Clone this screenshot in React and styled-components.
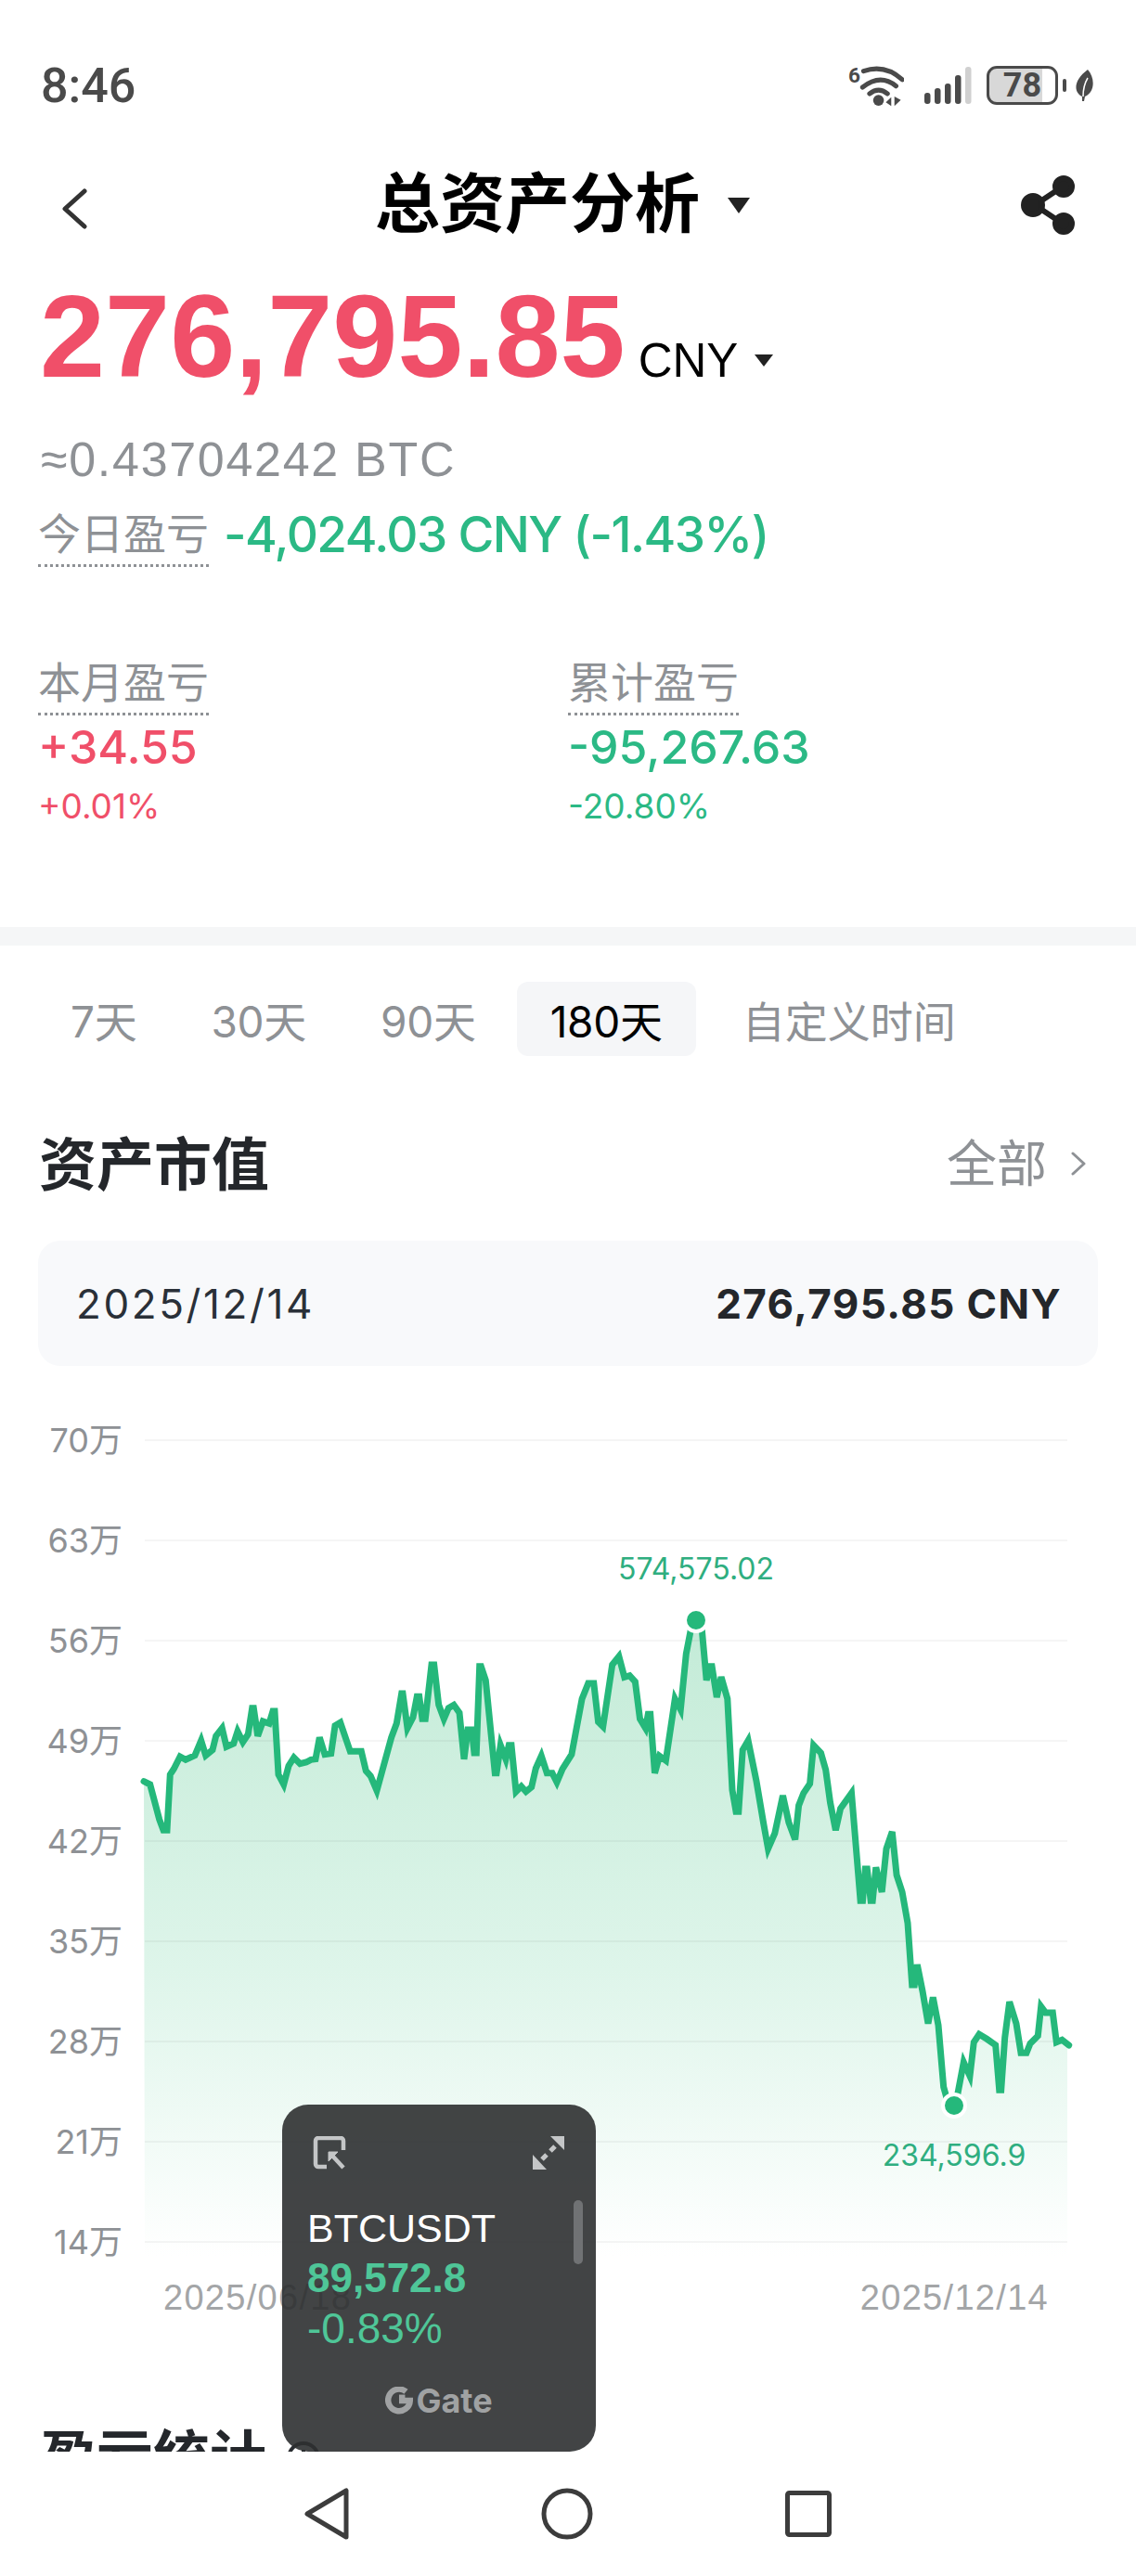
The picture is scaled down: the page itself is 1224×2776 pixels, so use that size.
import styled, { createGlobalStyle } from 'styled-components';

const GlobalStyle = createGlobalStyle`
  html, body { margin: 0; padding: 0; background: #fff; }
  * { box-sizing: border-box; }
  body { font-family: "Liberation Sans", "Noto Sans CJK SC", sans-serif; }
`;

const GRAY = '#8e9195';
const RED = '#f04f69';
const GREEN = '#2bb985';

// traced from the chart, three stretches of points
const partA = [[75,662],[95,672],[125,785],[138,820],[150,820],[160,640],[172,622],[192,582],[210,592],[240,578],[260,530],[275,578],[297,560],[308,515],[328,490],[342,550],[365,540],[378,500],[395,535],[412,510],[425,425],[430,425],[443,515],[460,468],[480,475],[492,435],[498,435],[510,640],[527,672],[543,612],[560,585],[580,605],[600,600],[615,592],[630,590],[643,520],[660,575],[680,572],[693,482],[710,472],[742,565],[778,565],[793,628],[808,645],[828,692],[875,520],[892,475],[908,378],[912,378],[927,490],[945,455],[958,388],[965,388],[975,460],[985,460],[1005,285],[1013,285],[1028,415],[1045,460],[1060,425],[1077,415],[1095,440],[1110,590],[1122,495],[1135,495],[1143,570],[1150,570],[1160,290],[1165,290],[1180,335],[1210,635],[1215,635],[1228,545],[1245,590],[1255,545],[1263,545],[1278,695],[1295,678],[1310,695],[1328,680],[1342,620],[1360,580],[1378,635],[1395,635]]
  .map(([x, y]) => [130 + x / 3, 1700 + y / 3]);
const partB = [[0,665],[15,622],[40,575],[68,395],[85,345],[100,345],[112,470],[125,485],[150,285],[168,258],[183,325],[197,320],[212,340],[225,460],[240,490],[247,445],[253,445],[265,635],[278,580],[295,595],[320,395],[335,430],[350,250],[362,175],[377,140],[393,175],[405,335],[415,290],[420,290],[433,390],[445,325],[462,395],[475,690],[485,760],[492,760],[503,560],[518,530],[540,660],[560,800],[572,880],[590,830],[612,708],[628,795],[645,850],[655,740],[668,700],[685,670],[695,545],[715,570],[728,625],[740,730],[755,820],[768,750],[798,700],[822,1048],[828,1048],[835,945],[840,945],[850,1048],[855,1048],[864,940],[880,1020],[892,880],[908,825],[920,965],[935,1020],[950,1120]]
  .map(([x, y]) => [600 + x / 2.513, 1700 + y / 3]);
const partC = [[248,270],[256,270],[265,205],[282,290],[300,395],[316,310],[333,400],[350,600],[360,635],[383,660],[395,625],[415,520],[435,565],[448,455],[465,430],[490,445],[518,465],[530,610],[536,610],[548,440],[563,325],[585,395],[600,490],[618,490],[630,460],[655,435],[665,340],[680,360],[703,360],[715,455],[733,448],[755,465]]
  .map(([x, y]) => [900 + x / 3, 2050 + y / 3]);

const points = [...partA, ...partB, ...partC];
const linePath = points.map(([x, y], i) => `${i ? 'L' : 'M'}${x.toFixed(1)} ${y.toFixed(1)}`).join(' ');
const areaPath = `${linePath} L1150 2205 L1150 2432 L156 2432 Z`;

const yLabels = ['70万', '63万', '56万', '49万', '42万', '35万', '28万', '21万', '14万'];
const gridYs = [1553, 1661, 1769, 1877, 1985, 2093, 2201, 2309, 2417];
const ranges = ['7天', '30天', '90天', '180天', '自定义时间'];

export default function App() {
  return (
    <Page>
      <GlobalStyle />
      <Scroller>
        <StatusBar>
          <Clock>8:46</Clock>
          <StatusIcons>
            <WifiIcon />
            <SignalIcon />
            <BatteryWrap>
              <BatteryBody>78</BatteryBody>
              <BatteryNub />
            </BatteryWrap>
            <LeafIcon />
          </StatusIcons>
        </StatusBar>

        <Header>
          <BackIcon width="28" height="44" viewBox="0 0 28 44" fill="none" stroke="#333" strokeWidth="5" strokeLinecap="round" strokeLinejoin="round">
            <path d="M25 3 L4 22 L25 41" />
          </BackIcon>
          <TitleGroup>
            <Title>总资产分析</Title>
            <Caret $w={25} $h={17} />
          </TitleGroup>
          <ShareIcon />
        </Header>

        <AmountRow>
          <Amount>276,795.85</Amount>
          <Currency>CNY</Currency>
          <CurrencyCaret $w={20} $h={13} />
        </AmountRow>
        <BtcLine>≈0.43704242 BTC</BtcLine>
        <TodayRow>
          <DottedLabel>今日盈亏</DottedLabel>
          <TodayValue>-4,024.03 CNY (-1.43%)</TodayValue>
        </TodayRow>

        <StatsGrid>
          <div>
            <DottedLabel>本月盈亏</DottedLabel>
            <StatValue $color={RED}>+34.55</StatValue>
            <StatPct $color={RED}>+0.01%</StatPct>
          </div>
          <div>
            <DottedLabel>累计盈亏</DottedLabel>
            <StatValue $color={GREEN}>-95,267.63</StatValue>
            <StatPct $color={GREEN}>-20.80%</StatPct>
          </div>
        </StatsGrid>

        <Divider />

        <Tabs>
          {ranges.map((r) => (
            <Tab key={r} $active={r === '180天'}>{r}</Tab>
          ))}
        </Tabs>

        <SectionHeader>
          <SectionTitle>资产市值</SectionTitle>
          <AllLink>
            <AllText>全部</AllText>
            <AllChevron width="18" height="26" viewBox="0 0 18 26" fill="none" stroke={GRAY} strokeWidth="3" strokeLinecap="round" strokeLinejoin="round">
              <path d="M3 2 L15 13 L3 24" />
            </AllChevron>
          </AllLink>
        </SectionHeader>

        <DateCard>
          <DateText>2025/12/14</DateText>
          <DateValue>276,795.85 CNY</DateValue>
        </DateCard>

        <ChartRow>
          <YAxis>
            {yLabels.map((l) => (
              <YLabel key={l}>{l}</YLabel>
            ))}
          </YAxis>
          <PlotSvg viewBox="156 1499 1012 957" width="1012" height="957">
            <defs>
              <linearGradient id="areaFill" gradientUnits="userSpaceOnUse" x1="0" y1="1747" x2="0" y2="2432">
                <stop offset="0" stopColor="#c3ebd7" />
                <stop offset="0.55" stopColor="#def5ea" />
                <stop offset="1" stopColor="#ffffff" />
              </linearGradient>
            </defs>
            <path d={areaPath} fill="url(#areaFill)" />
            {gridYs.map((y) => (
              <line key={y} x1="156" x2="1150" y1={y} y2={y} stroke="#000" strokeOpacity="0.04" strokeWidth="2" />
            ))}
            <path d={linePath} fill="none" stroke="#25b87b" strokeWidth="7" strokeLinejoin="miter" strokeLinecap="round" />
            <circle cx="750" cy="1747" r="12" fill="#25b87b" stroke="#fff" strokeWidth="4" />
            <circle cx="1028" cy="2270" r="12" fill="#25b87b" stroke="#fff" strokeWidth="4" />
            <ChartNote x="750" y="1703" textAnchor="middle">574,575.02</ChartNote>
            <ChartNote x="1028" y="2335" textAnchor="middle">234,596.9</ChartNote>
          </PlotSvg>
        </ChartRow>

        <XAxis>
          <span>2025/06/18</span>
          <span>2025/12/14</span>
        </XAxis>

        <ClippedTitle>
          盈亏统计
          <InfoCircle />
        </ClippedTitle>
      </Scroller>

      <NavBar>
        <svg width="56" height="60" viewBox="0 0 56 60" fill="none" stroke="#3c3c3c" strokeWidth="5" strokeLinejoin="round">
          <path d="M50 5 V55 L8 30 Z" />
        </svg>
        <svg width="56" height="60" viewBox="0 0 56 60" fill="none" stroke="#3c3c3c" strokeWidth="5">
          <circle cx="28" cy="30" r="25" />
        </svg>
        <svg width="56" height="60" viewBox="0 0 56 60" fill="none" stroke="#3c3c3c" strokeWidth="5" strokeLinejoin="round">
          <rect x="5.5" y="7.5" width="45" height="45" rx="2" />
        </svg>
      </NavBar>

      <FloatWindow>
        <FloatTools>
          <svg width="36" height="36" viewBox="0 0 36 36" fill="none" stroke="#c4c6c7" strokeWidth="4.5" strokeLinejoin="round">
            <path d="M33 15 V5 a3 3 0 0 0 -3 -3 H6 a3 3 0 0 0 -3 3 V30 a3 3 0 0 0 3 3 H15" />
            <path d="M17 17 H27 L17 27 Z" fill="#c4c6c7" strokeWidth="1" />
            <path d="M22 22 L33 34" />
          </svg>
          <svg width="36" height="36" viewBox="0 0 36 36" fill="#c4c6c7" stroke="none">
            <path d="M35 0 V15 L20 0 Z" />
            <path d="M1 36 V20 L16 36 Z" />
            <path d="M20 16 L25 11 M11 25 L16 20" stroke="#c4c6c7" strokeWidth="5" />
          </svg>
        </FloatTools>
        <Ticker>BTCUSDT</Ticker>
        <TickerPrice>89,572.8</TickerPrice>
        <TickerPct>-0.83%</TickerPct>
        <GateMark>
          <svg width="30" height="30" viewBox="0 0 28 28" fill="none" stroke="#a0a2a3" strokeWidth="6">
            <path d="M21 5 A11 11 0 1 0 25 14 H14" />
            <rect x="14" y="8" width="6" height="6" fill="#a0a2a3" stroke="none" />
          </svg>
          Gate
        </GateMark>
        <FloatScroll />
      </FloatWindow>
    </Page>
  );
}

function WifiIcon() {
  return (
    <WifiSvg width="60" height="48" viewBox="0 -10 175 140" fill="none" stroke="#4a4a4a" strokeWidth="15" strokeLinecap="round">
      <text x="0" y="50" fontFamily="Roboto, sans-serif" fontWeight="700" fontSize="66" fill="#4a4a4a" stroke="none">6</text>
      <path d="M48 15 Q115 -8 170 42" />
      <path d="M45 66 Q100 22 150 62" />
      <path d="M67 86 Q95 64 123 86" />
      <circle cx="95" cy="107" r="17" fill="#4a4a4a" stroke="none" />
      <path d="M118 113 L135 97 V125 Z M145 95 V125 L165 106 Z" fill="#4a4a4a" stroke="none" />
    </WifiSvg>
  );
}

function SignalIcon() {
  const bars = [
    { x: 0, h: 12, c: '#4a4a4a' },
    { x: 11, h: 17, c: '#4a4a4a' },
    { x: 22, h: 22, c: '#4a4a4a' },
    { x: 33, h: 31, c: '#4a4a4a' },
    { x: 44, h: 40, c: '#d0d0d0' },
  ];
  return (
    <svg width="51" height="40" viewBox="0 0 51 40">
      {bars.map((b) => (
        <rect key={b.x} x={b.x} y={40 - b.h} width="6.5" height={b.h} rx="3" fill={b.c} />
      ))}
    </svg>
  );
}

function LeafIcon() {
  return (
    <LeafSvg width="20" height="34" viewBox="0 0 20 34">
      <path d="M14 0 C22 9 22 24 11 29 L10 34 H8 L8 29 C-2 24 -1 11 14 0 Z" fill="#4a4a4a" />
      <path d="M9 29 C9 20 11 14 14 9" fill="none" stroke="#fff" strokeWidth="1.5" />
    </LeafSvg>
  );
}

function ShareIcon() {
  return (
    <ShareSvg width="62" height="64" viewBox="0 0 62 64" fill="#222" stroke="#222" strokeWidth="6">
      <path d="M46 12 L16 32 L46 52" fill="none" />
      <circle cx="47" cy="12" r="9" />
      <circle cx="14" cy="32" r="10" />
      <circle cx="47" cy="52" r="9" />
    </ShareSvg>
  );
}

function InfoCircle() {
  return (
    <svg width="38" height="38" viewBox="0 0 38 38" fill="none" stroke="#2a2d31" strokeWidth="4">
      <circle cx="19" cy="19" r="16" />
      <path d="M19 10 V12 M19 17 V28" />
    </svg>
  );
}

const Page = styled.div`
  position: relative;
  width: 1224px;
  height: 2776px;
  overflow: hidden;
  display: flex;
  flex-direction: column;
  background: #fff;
`;

const Scroller = styled.div`
  height: 2642px;
  overflow: hidden;
  flex: none;
`;

const StatusBar = styled.div`
  height: 160px;
  padding: 24px 46px 0 44px;
  display: flex;
  align-items: center;
  justify-content: space-between;
`;

const Clock = styled.div`
  font-family: Roboto, sans-serif;
  font-weight: 500;
  font-size: 52px;
  color: #4a4a4a;
`;

const StatusIcons = styled.div`
  display: flex;
  align-items: center;
  gap: 16px;
`;

const WifiSvg = styled.svg`
  margin-right: 6px;
`;

const LeafSvg = styled.svg`
  margin-left: -7px;
`;

const BatteryWrap = styled.div`
  display: flex;
  align-items: center;
  gap: 5px;
`;

const BatteryBody = styled.div`
  width: 77px;
  height: 42px;
  border: 3px solid #4a4a4a;
  border-radius: 11px;
  background: linear-gradient(to right, #d8d8d8 80%, transparent 80%);
  display: flex;
  align-items: center;
  justify-content: center;
  font-family: Roboto, sans-serif;
  font-weight: 700;
  font-size: 36px;
  color: #4a4a4a;
`;

const BatteryNub = styled.div`
  width: 4px;
  height: 14px;
  border-radius: 2px;
  background: #4a4a4a;
`;

const Header = styled.div`
  height: 120px;
  padding: 0 63px 0 66px;
  display: flex;
  align-items: center;
  justify-content: space-between;
`;

const BackIcon = styled.svg`
  margin-top: 10px;
`;

const ShareSvg = styled.svg`
  margin-top: 2px;
`;

const TitleGroup = styled.div`
  display: flex;
  align-items: center;
  gap: 30px;
  margin-left: 19px;
  margin-top: 2px;
`;

const Title = styled.h1`
  margin: 0;
  font-size: 70px;
  line-height: 80px;
  font-weight: 700;
  color: #000;
`;

const Caret = styled.span`
  width: 0;
  height: 0;
  border-left: ${(p) => p.$w / 2}px solid transparent;
  border-right: ${(p) => p.$w / 2}px solid transparent;
  border-top: ${(p) => p.$h}px solid #222;
`;

const CurrencyCaret = styled(Caret)`
  transform: translateY(-11px);
`;

const AmountRow = styled.div`
  margin-top: 22px;
  padding-left: 43px;
  display: flex;
  align-items: baseline;
`;

const Amount = styled.div`
  font-size: 126px;
  line-height: 122px;
  font-weight: 700;
  color: ${RED};
`;

const Currency = styled.span`
  margin-left: 14px;
  margin-right: 18px;
  font-size: 51px;
  color: #000;
`;

const BtcLine = styled.div`
  margin-top: 41px;
  padding-left: 44px;
  font-size: 52px;
  line-height: 60px;
  letter-spacing: 1.7px;
  color: ${GRAY};
`;

const TodayRow = styled.div`
  margin-top: 23px;
  padding-left: 41px;
  display: flex;
  align-items: flex-start;
  gap: 16px;
`;

const DottedLabel = styled.span`
  display: inline-block;
  font-size: 46px;
  line-height: 56px;
  padding-bottom: 4px;
  border-bottom: 3px dotted ${GRAY};
  color: ${GRAY};
`;

const TodayValue = styled.span`
  font-family: Inter, sans-serif;
  font-weight: 500;
  font-size: 53px;
  line-height: 56px;
  letter-spacing: -1.5px;
  color: ${GREEN};
`;

const StatsGrid = styled.div`
  margin-top: 97px;
  padding-left: 41px;
  display: grid;
  grid-template-columns: 571px 1fr;
`;

const StatValue = styled.div`
  margin-top: 6px;
  font-family: Inter, sans-serif;
  font-weight: 500;
  font-size: 50px;
  line-height: 56px;
  color: ${(p) => p.$color};
`;

const StatPct = styled.div`
  margin-top: 14px;
  font-family: Inter, sans-serif;
  font-size: 37px;
  line-height: 44px;
  color: ${(p) => p.$color};
`;

const Divider = styled.div`
  margin-top: 108px;
  height: 20px;
  background: #f5f6f7;
`;

const Tabs = styled.div`
  margin-top: 39px;
  padding-left: 40px;
  display: flex;
  gap: 8px;
`;

const Tab = styled.div`
  height: 80px;
  padding: 0 36px;
  display: flex;
  align-items: center;
  border-radius: 12px;
  font-family: Inter, "Noto Sans CJK SC", sans-serif;
  font-size: 46px;
  letter-spacing: -0.3px;
  color: ${(p) => (p.$active ? '#000' : GRAY)};
  background: ${(p) => (p.$active ? '#f5f6f8' : 'transparent')};

  &:last-child {
    margin-left: 6px;
    letter-spacing: 0;
  }
`;

const SectionHeader = styled.div`
  margin-top: 84px;
  height: 70px;
  padding: 0 53px 0 42px;
  display: flex;
  align-items: center;
  justify-content: space-between;
`;

const SectionTitle = styled.h2`
  margin: 0;
  font-size: 62px;
  line-height: 70px;
  font-weight: 700;
  color: #24272b;
`;

const AllLink = styled.div`
  display: flex;
  align-items: center;
  gap: 25px;
  font-size: 54px;
  color: ${GRAY};
`;

const AllText = styled.span`
  padding-bottom: 14px;
`;

const AllChevron = styled.svg`
  margin-bottom: 6px;
`;

const DateCard = styled.div`
  margin: 45px 41px 0;
  height: 135px;
  padding: 0 39px 0 41px;
  border-radius: 24px;
  background: #f8f9fb;
  display: flex;
  align-items: center;
  justify-content: space-between;
`;

const DateText = styled.span`
  font-family: Inter, sans-serif;
  font-size: 44px;
  letter-spacing: 2.6px;
  color: #2a3038;
`;

const DateValue = styled.span`
  font-family: Inter, sans-serif;
  font-weight: 700;
  font-size: 44px;
  letter-spacing: 1.4px;
  color: #24272b;
`;

const ChartRow = styled.div`
  margin-top: 26px;
  height: 958px;
  display: flex;
`;

const YAxis = styled.div`
  width: 156px;
  padding-right: 24px;
  flex: none;
`;

const YLabel = styled.div`
  height: 108px;
  line-height: 108px;
  text-align: right;
  font-family: Inter, "Noto Sans CJK SC", sans-serif;
  font-size: 36px;
  color: ${GRAY};
`;

const PlotSvg = styled.svg`
  overflow: visible;
  flex: none;
`;

const ChartNote = styled.text`
  font-family: Inter, sans-serif;
  font-size: 32px;
  fill: #2fae80;
`;

const XAxis = styled.div`
  height: 40px;
  padding: 0 94px 0 176px;
  display: flex;
  align-items: center;
  justify-content: space-between;
  font-size: 38px;
  letter-spacing: 1.3px;
  color: #a3a5a7;
`;

const ClippedTitle = styled.div`
  margin-top: 118px;
  padding-left: 43px;
  display: flex;
  align-items: center;
  gap: 21px;
  font-size: 61px;
  line-height: 70px;
  font-weight: 700;
  color: #24272b;
`;

const NavBar = styled.div`
  flex: 1;
  display: flex;
  align-items: center;
  justify-content: center;
  gap: 204px;
  padding-right: 2px;
  background: #fff;
`;

const FloatWindow = styled.div`
  position: absolute;
  left: 304px;
  top: 2268px;
  width: 338px;
  height: 374px;
  padding: 34px 27px 0;
  border-radius: 28px;
  background: rgba(46, 48, 49, 0.9);
`;

const FloatTools = styled.div`
  display: flex;
  justify-content: space-between;
  padding: 0 6px;
`;

const Ticker = styled.div`
  margin-top: 38px;
  font-size: 43px;
  line-height: 50px;
  color: #fff;
`;

const TickerPrice = styled.div`
  margin-top: 4px;
  font-size: 44px;
  line-height: 50px;
  font-weight: 700;
  color: #4fc698;
`;

const TickerPct = styled.div`
  margin-top: 4px;
  font-size: 46px;
  line-height: 50px;
  color: #4fc698;
`;

const GateMark = styled.div`
  margin-top: 38px;
  display: flex;
  align-items: center;
  justify-content: center;
  gap: 3px;
  font-family: Inter, sans-serif;
  font-weight: 700;
  font-size: 36px;
  line-height: 30px;
  color: #a0a2a3;
`;

const FloatScroll = styled.div`
  position: absolute;
  right: 14px;
  top: 103px;
  width: 10px;
  height: 69px;
  border-radius: 5px;
  background: #707274;
`;
